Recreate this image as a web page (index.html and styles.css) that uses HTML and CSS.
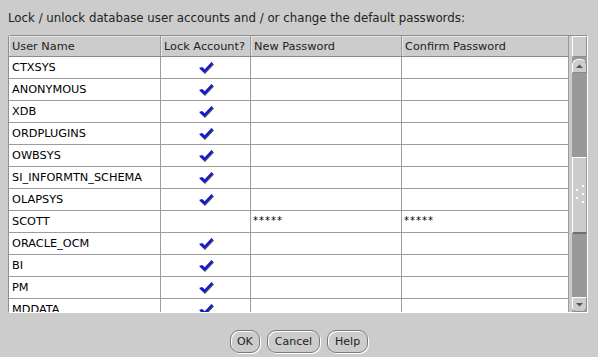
FILE: index.html
```html
<!DOCTYPE html>
<html lang="en">
<head>
    <meta charset="UTF-8">
    <title>Lock / unlock accounts</title>
    <link rel="stylesheet" href="styles.css">
</head>
<body>
    <p class="prompt">Lock / unlock database user accounts and / or change the default passwords:</p>

    <div class="panel">
        <div class="grid">
            <div class="row head">
                <div class="cell">User Name</div>
                <div class="cell">Lock Account?</div>
                <div class="cell">New Password</div>
                <div class="cell">Confirm Password</div>
            </div>
            <div class="rows">
                <div class="row"><div class="cell">CTXSYS</div><div class="cell lock"><svg class="check" viewBox="0 0 15 12"><path class="shade" d="M1 7 L4 5.5 L6 8 L13 1 L15 2.5 L6 12 Z"/><path class="tick" d="M0 6 L3 5 L5.5 7.5 L12.5 0 L14 1.2 L5.5 10.8 Z"/></svg></div><div class="cell"></div><div class="cell"></div></div>
                <div class="row"><div class="cell">ANONYMOUS</div><div class="cell lock"><svg class="check" viewBox="0 0 15 12"><path class="shade" d="M1 7 L4 5.5 L6 8 L13 1 L15 2.5 L6 12 Z"/><path class="tick" d="M0 6 L3 5 L5.5 7.5 L12.5 0 L14 1.2 L5.5 10.8 Z"/></svg></div><div class="cell"></div><div class="cell"></div></div>
                <div class="row"><div class="cell">XDB</div><div class="cell lock"><svg class="check" viewBox="0 0 15 12"><path class="shade" d="M1 7 L4 5.5 L6 8 L13 1 L15 2.5 L6 12 Z"/><path class="tick" d="M0 6 L3 5 L5.5 7.5 L12.5 0 L14 1.2 L5.5 10.8 Z"/></svg></div><div class="cell"></div><div class="cell"></div></div>
                <div class="row"><div class="cell">ORDPLUGINS</div><div class="cell lock"><svg class="check" viewBox="0 0 15 12"><path class="shade" d="M1 7 L4 5.5 L6 8 L13 1 L15 2.5 L6 12 Z"/><path class="tick" d="M0 6 L3 5 L5.5 7.5 L12.5 0 L14 1.2 L5.5 10.8 Z"/></svg></div><div class="cell"></div><div class="cell"></div></div>
                <div class="row"><div class="cell">OWBSYS</div><div class="cell lock"><svg class="check" viewBox="0 0 15 12"><path class="shade" d="M1 7 L4 5.5 L6 8 L13 1 L15 2.5 L6 12 Z"/><path class="tick" d="M0 6 L3 5 L5.5 7.5 L12.5 0 L14 1.2 L5.5 10.8 Z"/></svg></div><div class="cell"></div><div class="cell"></div></div>
                <div class="row"><div class="cell">SI_INFORMTN_SCHEMA</div><div class="cell lock"><svg class="check" viewBox="0 0 15 12"><path class="shade" d="M1 7 L4 5.5 L6 8 L13 1 L15 2.5 L6 12 Z"/><path class="tick" d="M0 6 L3 5 L5.5 7.5 L12.5 0 L14 1.2 L5.5 10.8 Z"/></svg></div><div class="cell"></div><div class="cell"></div></div>
                <div class="row"><div class="cell">OLAPSYS</div><div class="cell lock"><svg class="check" viewBox="0 0 15 12"><path class="shade" d="M1 7 L4 5.5 L6 8 L13 1 L15 2.5 L6 12 Z"/><path class="tick" d="M0 6 L3 5 L5.5 7.5 L12.5 0 L14 1.2 L5.5 10.8 Z"/></svg></div><div class="cell"></div><div class="cell"></div></div>
                <div class="row"><div class="cell">SCOTT</div><div class="cell lock"></div><div class="cell pw">*****</div><div class="cell pw">*****</div></div>
                <div class="row"><div class="cell">ORACLE_OCM</div><div class="cell lock"><svg class="check" viewBox="0 0 15 12"><path class="shade" d="M1 7 L4 5.5 L6 8 L13 1 L15 2.5 L6 12 Z"/><path class="tick" d="M0 6 L3 5 L5.5 7.5 L12.5 0 L14 1.2 L5.5 10.8 Z"/></svg></div><div class="cell"></div><div class="cell"></div></div>
                <div class="row"><div class="cell">BI</div><div class="cell lock"><svg class="check" viewBox="0 0 15 12"><path class="shade" d="M1 7 L4 5.5 L6 8 L13 1 L15 2.5 L6 12 Z"/><path class="tick" d="M0 6 L3 5 L5.5 7.5 L12.5 0 L14 1.2 L5.5 10.8 Z"/></svg></div><div class="cell"></div><div class="cell"></div></div>
                <div class="row"><div class="cell">PM</div><div class="cell lock"><svg class="check" viewBox="0 0 15 12"><path class="shade" d="M1 7 L4 5.5 L6 8 L13 1 L15 2.5 L6 12 Z"/><path class="tick" d="M0 6 L3 5 L5.5 7.5 L12.5 0 L14 1.2 L5.5 10.8 Z"/></svg></div><div class="cell"></div><div class="cell"></div></div>
                <div class="row"><div class="cell">MDDATA</div><div class="cell lock"><svg class="check" viewBox="0 0 15 12"><path class="shade" d="M1 7 L4 5.5 L6 8 L13 1 L15 2.5 L6 12 Z"/><path class="tick" d="M0 6 L3 5 L5.5 7.5 L12.5 0 L14 1.2 L5.5 10.8 Z"/></svg></div><div class="cell"></div><div class="cell"></div></div>
            </div>
        </div>

        <div class="gap"></div>

        <div class="vscroll">
            <div class="corner"></div>
            <div class="sb-btn up"><svg viewBox="0 0 13 13"><path d="M3 8 L6.5 4.5 L10 8 Z"/></svg></div>
            <div class="track">
                <div class="track-fill top"></div>
                <div class="thumb">
                    <svg class="grip" viewBox="0 0 13 20">
                        <rect x="9" y="0" width="2" height="2"/>
                        <rect x="3" y="4" width="2" height="2"/>
                        <rect x="9" y="8" width="2" height="2"/>
                        <rect x="3" y="12" width="2" height="2"/>
                        <rect x="9" y="16" width="2" height="2"/>
                    </svg>
                </div>
                <div class="track-fill"></div>
            </div>
            <div class="sb-btn down"><svg viewBox="0 0 13 13"><path d="M3 5 L10 5 L6.5 8.5 Z"/></svg></div>
        </div>
    </div>

    <div class="buttons">
        <button class="btn ok">OK</button>
        <button class="btn">Cancel</button>
        <button class="btn">Help</button>
    </div>
</body>
</html>
```

FILE: styles.css
```css
* {
    margin: 0;
    padding: 0;
    box-sizing: border-box;
}

body {
    background-color: #cccccc;
    font-family: "DejaVu Sans", sans-serif;
    font-size: 11.3px;
    color: #000;
    width: 598px;
    height: 357px;
    overflow: hidden;
}

.prompt {
    height: 35px;
    padding: 11px 0 0 8px;
    line-height: 15px;
    font-size: 11.8px;
    color: #222;
}

.panel {
    display: flex;
    width: 580px;
    height: 278px;
    margin-left: 8px;
    border: 1px solid #8f8f8f;
    border-right-color: #ffffff;
    border-bottom-color: #ffffff;
    border-top-left-radius: 3px;
    background-color: #ffffff;
}

.grid {
    width: 560px;
    overflow: hidden;
}

.row {
    display: grid;
    grid-template-columns: 152px 90px 151px 167px;
    height: 22px;
    border-bottom: 1px solid #9c9c9c;
}

.cell {
    display: flex;
    align-items: center;
    padding-left: 3px;
    border-right: 1px solid #9c9c9c;
    white-space: nowrap;
    overflow: hidden;
}

.head {
    height: 21px;
    background-color: #cccccc;
    border-bottom: 1px solid #8a8a8a;
    color: #222;
}

.head .cell {
    border-right: 1px solid #999;
    box-shadow: inset 1px 1px 0 #e6e6e6;
}

.lock {
    justify-content: center;
    padding-left: 0;
}

.check {
    width: 15px;
    height: 12px;
    margin-left: 1px;
}

.check .shade {
    fill: #4a4a6a;
}

.check .tick {
    fill: #1414d8;
}

.pw {
    padding-left: 2px;
    font-size: 10px;
    letter-spacing: 1px;
    padding-bottom: 3px;
}

.gap {
    width: 3px;
    background-color: #cccccc;
}

.vscroll {
    width: 15px;
    display: flex;
    flex-direction: column;
    background-color: #999999;
}

.corner {
    height: 21px;
    background-color: #cccccc;
    border: 1px solid #8f8f8f;
    border-top-color: #ffffff;
    border-left-color: #ffffff;
}

.sb-btn {
    height: 15px;
    background-color: #cccccc;
    border: 1px solid #ffffff;
    border-right-color: #8a8a8a;
    border-bottom-color: #8a8a8a;
}

.sb-btn.up {
    margin-top: 2px;
    height: 14px;
    border-top-left-radius: 6px;
    border-top-right-radius: 6px;
}

.sb-btn.down {
    border-bottom-left-radius: 5px;
    border-bottom-right-radius: 5px;
}

.sb-btn svg {
    display: block;
    width: 13px;
    height: 13px;
    fill: #555;
}

.track {
    flex: 1;
    display: flex;
    flex-direction: column;
}

.track-fill {
    flex: 1;
}

.track-fill.top {
    flex: 0 0 84px;
}

.thumb {
    height: 77px;
    background-color: #cccccc;
    border: 1px solid #ffffff;
    border-right-color: #9a9a9a;
    border-bottom: 2px solid #6f6f6f;
    display: flex;
    align-items: center;
    justify-content: center;
}

.grip {
    width: 13px;
    height: 20px;
    fill: #ffffff;
    margin-top: -1px;
}

.buttons {
    display: flex;
    justify-content: center;
    gap: 7px;
    margin-top: 17px;
}

.btn {
    font-family: "DejaVu Sans", sans-serif;
    font-size: 11px;
    color: #222;
    height: 23px;
    padding: 0 7px;
    background-color: #cccccc;
    border: 1px solid #7a7a7a;
    border-radius: 9px;
    box-shadow: inset 1px 1px 0 #ffffff, 1px 1px 0 #ffffff;
}

.btn.ok {
    padding: 0 6px;
}
```
